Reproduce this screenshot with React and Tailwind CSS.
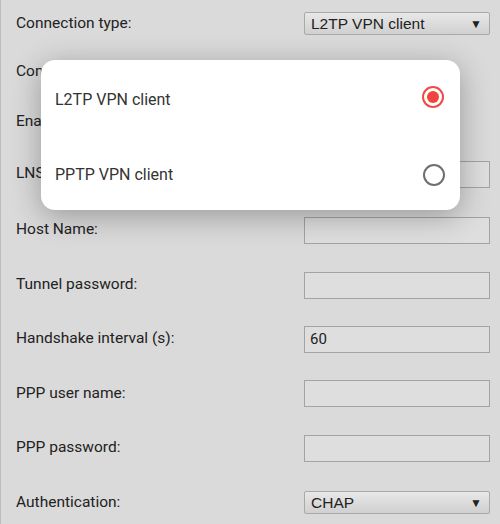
import React from 'react';

const font = { fontFamily: 'Roboto, "Noto Sans", sans-serif' };
const selectFont = { fontFamily: '"Liberation Sans", Arial, sans-serif' };

function Select({ value }) {
  return (
    <div
      className="w-[186px] h-[23px] flex items-center justify-between pl-[6px] pr-[7px] border border-[#a9a9a9] rounded-[2px] bg-gradient-to-b from-[#e8e8e8] to-[#d0d0d0] text-[15.5px] text-[#222]"
      style={selectFont}
    >
      <span>{value}</span>
      <span className="text-[12px]">▼</span>
    </div>
  );
}

function Input({ value }) {
  return (
    <div className="w-[186px] h-[27px] flex items-center px-[5px] border border-[#a3a3a3] bg-[#dedede] text-[15px] text-[#222]">
      {value}
    </div>
  );
}

function Row({ label, h, children }) {
  return (
    <div className={`flex items-center justify-between ${h}`}>
      <span className="text-[15.5px] text-[#222]">{label}</span>
      {children}
    </div>
  );
}

function Radio({ checked }) {
  if (checked) {
    return (
      <div className="w-[22px] h-[22px] mb-[6px] rounded-full border-2 border-[#ee4b45] flex items-center justify-center">
        <div className="w-[12px] h-[12px] rounded-full bg-[#f2433d]" />
      </div>
    );
  }
  return <div className="w-[22px] h-[22px] rounded-full border-2 border-[#6f6f6f]" />;
}

export default function App() {
  return (
    <div className="relative w-[500px] h-[524px] overflow-hidden bg-[#dadada] border-l border-[#bdbdbd]" style={font}>
      <div className="pl-[15px] pr-[10px]">
        <Row label="Connection type:" h="h-[47px]">
          <Select value="L2TP VPN client" />
        </Row>
        <Row label="Connection name:" h="h-[50px]" />
        <Row label="Enable:" h="h-[49px]" />
        <Row label="LNS address:" h="h-[56px]">
          <Input />
        </Row>
        <Row label="Host Name:" h="h-[56px]">
          <Input />
        </Row>
        <Row label="Tunnel password:" h="h-[54px]">
          <Input />
        </Row>
        <Row label="Handshake interval (s):" h="h-[54px]">
          <Input value="60" />
        </Row>
        <Row label="PPP user name:" h="h-[55px]">
          <Input />
        </Row>
        <Row label="PPP password:" h="h-[54px]">
          <Input />
        </Row>
        <Row label="Authentication:" h="h-[55px]">
          <Select value="CHAP" />
        </Row>
      </div>

      <div className="absolute left-[40px] top-[60px] w-[419px] h-[150px] bg-white rounded-[14px] shadow-[0_6px_30px_rgba(0,0,0,0.3)] flex flex-col pt-[5px]">
        <div className="flex items-center justify-between h-[70px] pl-[14px] pr-[16px]">
          <span className="text-[16px] text-[#333]">L2TP VPN client</span>
          <Radio checked />
        </div>
        <div className="flex items-center justify-between h-[75px] pl-[14px] pr-[15px] pt-[4px]">
          <span className="text-[16px] text-[#333]">PPTP VPN client</span>
          <Radio />
        </div>
      </div>
    </div>
  );
}
